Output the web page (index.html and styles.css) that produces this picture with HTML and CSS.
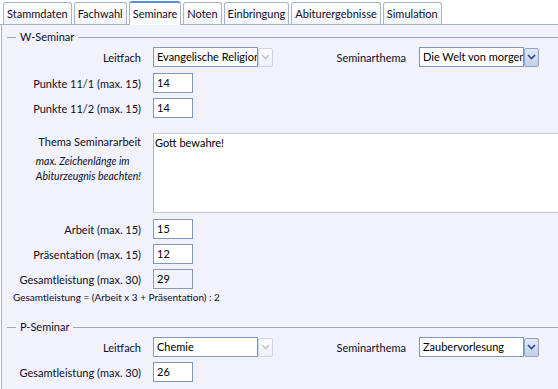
FILE: index.html
```html
<!DOCTYPE html>
<html>
<head>
<meta charset="utf-8">
<link rel="stylesheet" href="styles.css">
</head>
<body>
<div class="tabbar">
  <div class="tab">Stammdaten</div>
  <div class="tab">Fachwahl</div>
  <div class="tab active">Seminare</div>
  <div class="tab">Noten</div>
  <div class="tab">Einbringung</div>
  <div class="tab">Abiturergebnisse</div>
  <div class="tab">Simulation</div>
</div>
<div class="panel">
  <div class="group-head w-head"><span class="dash"></span><span class="title">W-Seminar</span><span class="rule"></span></div>
  <div class="row r-first">
    <div class="label">Leitfach</div>
    <div class="combo"><div class="field sel">Evangelische Religion</div><div class="btn disabled"><svg width="9" height="6" viewBox="0 0 9 6"><path d="M1 1 L4.5 4.5 L8 1" fill="none" stroke="#c4c8d4" stroke-width="1.6"/></svg></div></div>
    <div class="label2">Seminarthema</div>
    <div class="combo"><div class="field sel">Die Welt von morgen</div><div class="btn"><svg width="9" height="6" viewBox="0 0 9 6"><path d="M1 1 L4.5 4.5 L8 1" fill="none" stroke="#2e4a86" stroke-width="1.6"/></svg></div></div>
  </div>
  <div class="row r-six">
    <div class="label">Punkte 11/1 (max. 15)</div>
    <div class="field num">14</div>
  </div>
  <div class="row r-five">
    <div class="label">Punkte 11/2 (max. 15)</div>
    <div class="field num">14</div>
  </div>
  <div class="row r-text">
    <div class="label label-block">
      <div class="lt">Thema Seminararbeit</div>
      <div class="note">max. Zeichenlänge im<br>Abiturzeugnis beachten!</div>
    </div>
    <div class="textarea">Gott bewahre!</div>
  </div>
  <div class="row r-six">
    <div class="label">Arbeit (max. 15)</div>
    <div class="field num">15</div>
  </div>
  <div class="row r-five">
    <div class="label">Präsentation (max. 15)</div>
    <div class="field num">12</div>
  </div>
  <div class="row r-five">
    <div class="label">Gesamtleistung (max. 30)</div>
    <div class="field num ro">29</div>
  </div>
  <div class="formula">Gesamtleistung = (Arbeit x 3 + Präsentation) : 2</div>

  <div class="group-head p-head"><span class="dash"></span><span class="title">P-Seminar</span><span class="rule"></span></div>
  <div class="row r-first">
    <div class="label">Leitfach</div>
    <div class="combo"><div class="field sel">Chemie</div><div class="btn disabled"><svg width="9" height="6" viewBox="0 0 9 6"><path d="M1 1 L4.5 4.5 L8 1" fill="none" stroke="#c4c8d4" stroke-width="1.6"/></svg></div></div>
    <div class="label2">Seminarthema</div>
    <div class="combo"><div class="field sel">Zaubervorlesung</div><div class="btn"><svg width="9" height="6" viewBox="0 0 9 6"><path d="M1 1 L4.5 4.5 L8 1" fill="none" stroke="#2e4a86" stroke-width="1.6"/></svg></div></div>
  </div>
  <div class="row r-five">
    <div class="label">Gesamtleistung (max. 30)</div>
    <div class="field num">26</div>
  </div>
</div>
</body>
</html>
```
FILE: styles.css
```css
html, body {
  margin: 0;
  padding: 0;
  background: #ffffff;
  width: 558px;
  height: 389px;
  overflow: hidden;
}
body {
  font-family: "Lato", "DejaVu Sans", sans-serif;
  font-size: 11px;
  color: #0e0e26;
}
.tabbar {
  display: flex;
  align-items: flex-end;
  gap: 2px;
  padding: 0 0 0 3px;
  height: 25px;
  box-sizing: border-box;
  border-bottom: 1px solid #a8b2c6;
  background: #ffffff;
}
.tab {
  height: 22px;
  line-height: 21px;
  box-sizing: border-box;
  padding: 0 3px;
  border: 1px solid #a7b3c9;
  border-bottom: none;
  border-radius: 3px 3px 0 0;
  background: linear-gradient(#ffffff, #f4f4fa);
  white-space: nowrap;
}
.tab.active {
  height: 24px;
  line-height: 21px;
  margin-bottom: -1px;
  border-top: 2px solid #5f8fd8;
  background: #ffffff;
}
.panel {
  height: 364px;
  box-sizing: border-box;
  margin-left: 1px;
  border-left: 1px solid #a8b2c6;
  background: #f2f2fc;
  padding-top: 5px;
}
.group-head {
  display: flex;
  align-items: center;
  height: 14px;
  padding-left: 5px;
}
.dash {
  width: 9px;
  height: 1px;
  background: #a5a5b0;
}
.title {
  padding: 0 4px 0 4px;
  line-height: 14px;
}
.rule {
  flex: 1;
  height: 1px;
  background: #a5a5b0;
}
.row {
  display: flex;
  align-items: center;
  height: 20px;
}
.r-first { margin-top: 3px; }
.r-six { margin-top: 6px; }
.r-five { margin-top: 5px; }
.r-text { margin-top: 15px; height: 80px; align-items: flex-start; }
.label {
  width: 139px;
  flex: none;
  text-align: right;
  margin-right: 12px;
  white-space: nowrap;
}
.label2 {
  width: 133px;
  flex: none;
  text-align: right;
  margin-right: 13px;
  white-space: nowrap;
}
.label-block { padding-top: 1px; }
.lt { line-height: 15px; }
.note {
  display: inline-block;
  text-align: left;
  font-style: italic;
  font-size: 10.5px;
  line-height: 15px;
  margin-top: 5px;
}
.combo {
  display: flex;
  align-items: center;
  flex: none;
}
.field {
  box-sizing: border-box;
  height: 20px;
  line-height: 18px;
  border: 1px solid #7f98bf;
  background: #ffffff;
  padding: 0 3px;
  white-space: nowrap;
  overflow: hidden;
  color: #000000;
}
.sel { width: 105px; }
.num { width: 40px; }
.ro {
  background: #f2f2fc;
  border-color: #8c9ab4;
}
.btn {
  box-sizing: border-box;
  width: 15px;
  height: 19px;
  border: 1px solid #8ea2c8;
  border-radius: 2px;
  background: linear-gradient(#e2e8f6, #c2cfea);
  display: flex;
  align-items: center;
  justify-content: center;
}
.btn.disabled {
  border-color: #d0d4de;
  background: linear-gradient(#fbfbfe, #eef0f6);
}
.textarea {
  flex: 1;
  box-sizing: border-box;
  height: 80px;
  background: #ffffff;
  border-top: 1px solid #c8c8d6;
  border-bottom: 1px solid #c8c8d6;
  border-left: 1px solid #aab6ce;
  padding: 1px 1px;
  line-height: 15px;
  color: #000000;
}
.formula {
  font-size: 10px;
  line-height: 14px;
  margin-top: 1px;
  padding-left: 11px;
}
.p-head { margin-top: 16px; }
```
